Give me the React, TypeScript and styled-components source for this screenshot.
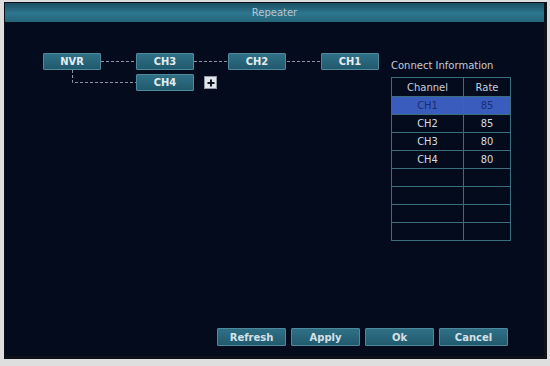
import { createGlobalStyle } from 'styled-components'
import styled from 'styled-components'

const GlobalStyle = createGlobalStyle`
  html, body {
    margin: 0;
    padding: 0;
    background: #dedede;
  }
  body {
    font-family: 'DejaVu Sans', 'Liberation Sans', sans-serif;
  }
`

interface NodeDef {
  label: string
  x: number
  y: number
}

const nodes: NodeDef[] = [
  { label: 'NVR', x: 0, y: 0 },
  { label: 'CH3', x: 93, y: 0 },
  { label: 'CH2', x: 185, y: 0 },
  { label: 'CH1', x: 278, y: 0 },
  { label: 'CH4', x: 93, y: 21 }
]

const rows = [
  { channel: 'CH1', rate: '85' },
  { channel: 'CH2', rate: '85' },
  { channel: 'CH3', rate: '80' },
  { channel: 'CH4', rate: '80' },
  null,
  null,
  null,
  null
]

const buttons = ['Refresh', 'Apply', 'Ok', 'Cancel']

const App = () => {
  return (
    <>
      <GlobalStyle />
      <Window>
        <TitleBar>Repeater</TitleBar>
        <Main>
          <Diagram>
            <Links width="340" height="40">
              <line x1="58" y1="8.5" x2="93" y2="8.5" />
              <line x1="151" y1="8.5" x2="185" y2="8.5" />
              <line x1="244" y1="8.5" x2="278" y2="8.5" />
              <polyline points="29.5,17 29.5,29.5 93,29.5" />
            </Links>
            {nodes.map((n) => (
              <Node key={n.label} style={{ left: n.x, top: n.y }}>
                {n.label}
              </Node>
            ))}
            <AddBox style={{ left: 161, top: 23 }}>
              <svg width="8" height="8" viewBox="0 0 8 8">
                <path d="M4 0.5v7M0.5 4h7" stroke="#0c1424" strokeWidth="2" />
              </svg>
            </AddBox>
          </Diagram>
          <InfoPanel>
            <InfoTitle>Connect Information</InfoTitle>
            <Table>
              <thead>
                <tr>
                  <HeadCell>Channel</HeadCell>
                  <HeadCell>Rate</HeadCell>
                </tr>
              </thead>
              <tbody>
                {rows.map((r, i) => (
                  <Row key={i} $active={i === 0}>
                    <Cell>{r ? r.channel : ''}</Cell>
                    <Cell>{r ? r.rate : ''}</Cell>
                  </Row>
                ))}
              </tbody>
            </Table>
          </InfoPanel>
        </Main>
        <Footer>
          {buttons.map((b) => (
            <ActionButton key={b}>{b}</ActionButton>
          ))}
        </Footer>
      </Window>
    </>
  )
}

const Window = styled.div`
  box-sizing: border-box;
  margin: 2px 0 0 4px;
  width: 543px;
  height: 357px;
  border: 1px solid #0e1218;
  border-right-width: 3px;
  border-bottom-width: 3px;
  background: #040b1d;
  display: flex;
  flex-direction: column;
`

const TitleBar = styled.div`
  height: 19px;
  line-height: 19px;
  text-align: center;
  font-size: 10px;
  color: #b8c6d0;
  background: linear-gradient(to bottom, #1c4f63 0%, #2d7690 55%, #246579 100%);
`

const Main = styled.div`
  flex: 1;
  display: flex;
  padding: 31px 0 0 38px;
`

const Diagram = styled.div`
  position: relative;
  width: 348px;
  height: 60px;
`

const Links = styled.svg`
  position: absolute;
  left: 0;
  top: 0;
  fill: none;
  stroke: #8a96a2;
  stroke-width: 1;
  stroke-dasharray: 3 2;
`

const Node = styled.div`
  position: absolute;
  box-sizing: border-box;
  width: 58px;
  height: 17px;
  line-height: 15px;
  text-align: center;
  font-family: 'DejaVu Sans Condensed', 'DejaVu Sans', sans-serif;
  font-weight: bold;
  font-size: 11px;
  color: #e4ecf0;
  background: linear-gradient(to bottom, #2f7086 0%, #215a6d 100%);
  border: 1px solid #4f8a9c;
  border-radius: 1px;
`

const AddBox = styled.div`
  position: absolute;
  box-sizing: border-box;
  width: 13px;
  height: 13px;
  display: flex;
  align-items: center;
  justify-content: center;
  background: #e2e6ea;
  border: 1px solid #8c98a4;
`

const InfoPanel = styled.div`
  display: flex;
  flex-direction: column;
  padding-top: 6px;
`

const InfoTitle = styled.div`
  font-size: 10px;
  color: #c4ccd4;
  height: 13px;
  line-height: 13px;
  margin-bottom: 5px;
`

const Table = styled.table`
  border-collapse: collapse;
  width: 120px;
  table-layout: fixed;
  font-size: 10px;
  border: 1px solid #3b6e7c;

  th:first-child,
  td:first-child {
    width: 71px;
  }
`

const HeadCell = styled.th`
  height: 18px;
  padding: 0;
  font-weight: normal;
  color: #c8d0d8;
  border: 1px solid #3b6e7c;
  text-align: center;
`

const Row = styled.tr<{ $active: boolean }>`
  background: ${({ $active }) => ($active ? '#3a5cbc' : 'transparent')};
  color: ${({ $active }) => ($active ? '#1a2c78' : '#d4dce2')};
`

const Cell = styled.td`
  height: 17px;
  padding: 0;
  border: 1px solid #3b6e7c;
  text-align: center;
  font-size: 11px;
  font-family: 'DejaVu Sans Condensed', 'DejaVu Sans', sans-serif;
`

const Footer = styled.div`
  display: flex;
  justify-content: flex-end;
  gap: 5px;
  padding: 0 36px 10px 0;
`

const ActionButton = styled.button`
  box-sizing: border-box;
  width: 69px;
  height: 18px;
  padding: 0;
  font-family: 'DejaVu Sans', sans-serif;
  font-weight: bold;
  font-size: 10px;
  color: #d6e0e6;
  background: linear-gradient(to bottom, #2f7086 0%, #215a6d 100%);
  border: 1px solid #4f8a9c;
  border-radius: 1px;
`

export default App
